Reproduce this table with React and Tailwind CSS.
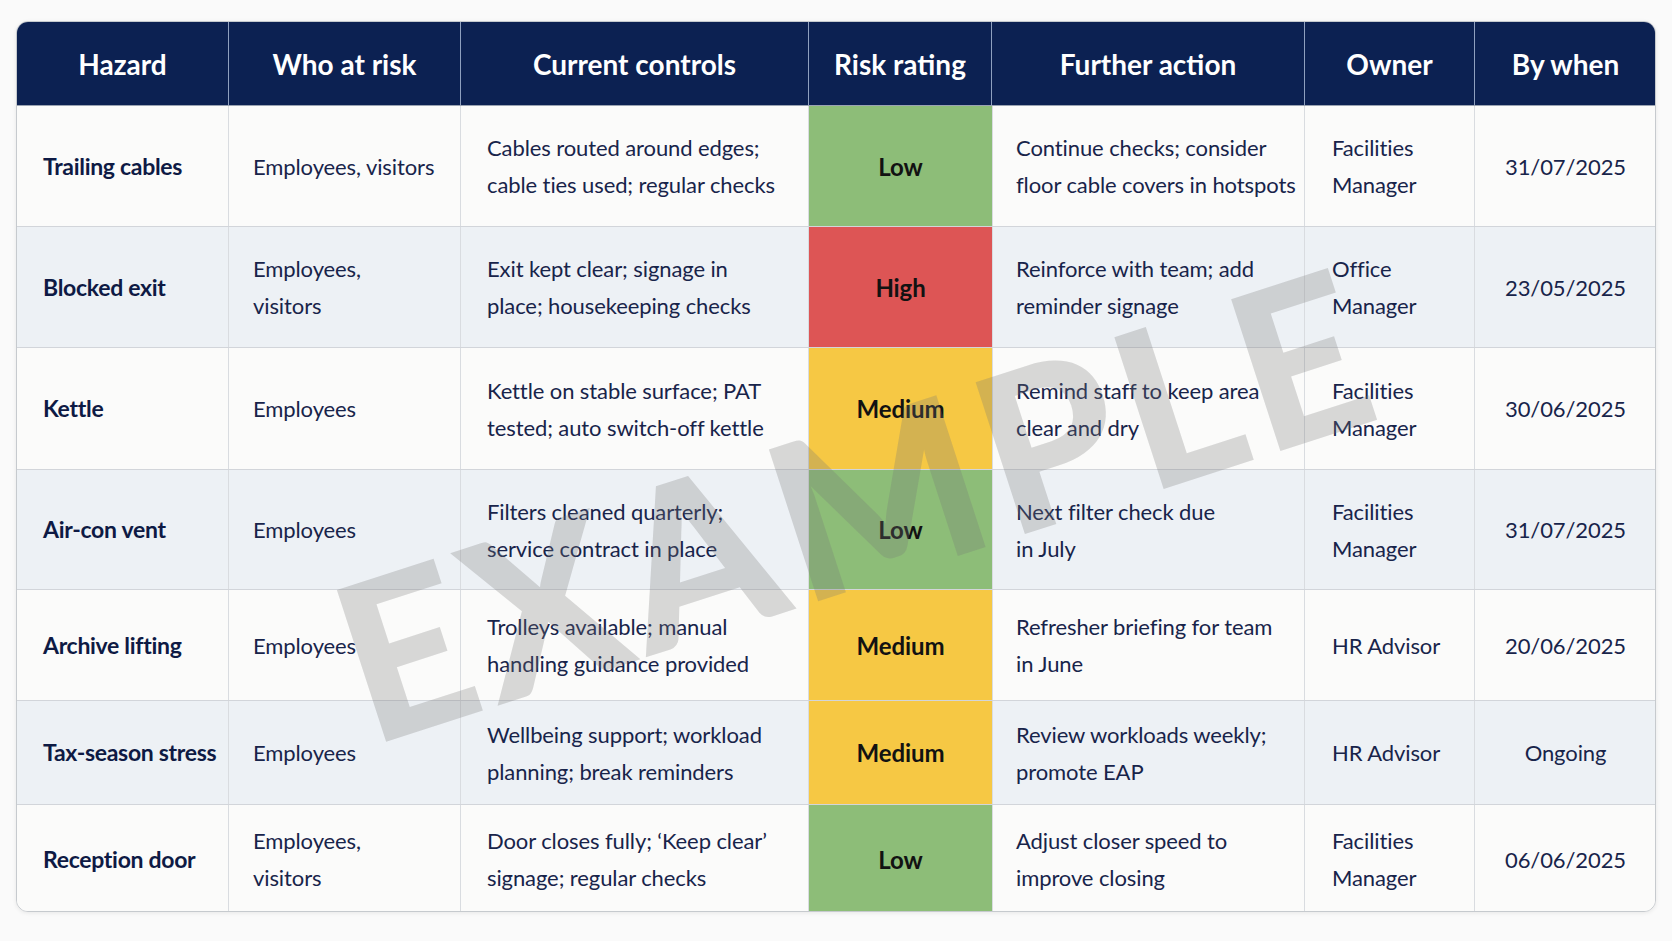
import React from "react";

const cols = [
  { title: "Hazard", cell: "pl-[26px] justify-start" },
  { title: "Who at risk", cell: "pl-[24px] justify-start" },
  { title: "Current controls", cell: "pl-[26px] justify-start" },
  { title: "Risk rating", cell: "justify-center" },
  { title: "Further action", cell: "pl-[23px] justify-start" },
  { title: "Owner", cell: "pl-[27px] justify-start" },
  { title: "By when", cell: "justify-center text-center" },
];

const riskStyles = {
  Low: "bg-[#8dbd78]",
  High: "bg-[#dd5555]",
  Medium: "bg-[#f6c844]",
};

const rows = [
  {
    h: "h-[121px]",
    bg: "bg-[#fbfbfa]",
    hazard: "Trailing cables",
    who: ["Employees, visitors"],
    controls: ["Cables routed around edges;", "cable ties used; regular checks"],
    risk: "Low",
    action: ["Continue checks; consider", "floor cable covers in hotspots"],
    owner: ["Facilities", "Manager"],
    when: "31/07/2025",
  },
  {
    h: "h-[121px]",
    bg: "bg-[#edf1f5]",
    hazard: "Blocked exit",
    who: ["Employees,", "visitors"],
    controls: ["Exit kept clear; signage in", "place; housekeeping checks"],
    risk: "High",
    action: ["Reinforce with team; add", "reminder signage"],
    owner: ["Office", "Manager"],
    when: "23/05/2025",
  },
  {
    h: "h-[122px]",
    bg: "bg-[#fbfbfa]",
    hazard: "Kettle",
    who: ["Employees"],
    controls: ["Kettle on stable surface; PAT", "tested; auto switch-off kettle"],
    risk: "Medium",
    action: ["Remind staff to keep area", "clear and dry"],
    owner: ["Facilities", "Manager"],
    when: "30/06/2025",
  },
  {
    h: "h-[120px]",
    bg: "bg-[#edf1f5]",
    hazard: "Air-con vent",
    who: ["Employees"],
    controls: ["Filters cleaned quarterly;", "service contract in place"],
    risk: "Low",
    action: ["Next filter check due", "in July"],
    owner: ["Facilities", "Manager"],
    when: "31/07/2025",
  },
  {
    h: "h-[111px]",
    bg: "bg-[#fbfbfa]",
    hazard: "Archive lifting",
    who: ["Employees"],
    controls: ["Trolleys available; manual", "handling guidance provided"],
    risk: "Medium",
    action: ["Refresher briefing for team", "in June"],
    owner: ["HR Advisor"],
    when: "20/06/2025",
  },
  {
    h: "h-[104px]",
    bg: "bg-[#edf1f5]",
    hazard: "Tax-season stress",
    who: ["Employees"],
    controls: ["Wellbeing support; workload", "planning; break reminders"],
    risk: "Medium",
    action: ["Review workloads weekly;", "promote EAP"],
    owner: ["HR Advisor"],
    when: "Ongoing",
  },
  {
    h: "h-[108px]",
    bg: "bg-[#fbfbfa]",
    hazard: "Reception door",
    who: ["Employees,", "visitors"],
    controls: ["Door closes fully; \u2018Keep clear\u2019", "signage; regular checks"],
    risk: "Low",
    action: ["Adjust closer speed to", "improve closing"],
    owner: ["Facilities", "Manager"],
    when: "06/06/2025",
  },
];

const Lines = ({ lines }) => (
  <div className="flex flex-col">
    {lines.map((l) => (
      <span key={l} className="whitespace-nowrap">
        {l}
      </span>
    ))}
  </div>
);

const App = () => {
  return (
    <div className="min-h-screen bg-[#fafafa] pt-[21px] pl-[16px] font-['Lato',sans-serif]">
      <div className="relative w-[1640px] h-[891px] rounded-[12px] border border-[#c6cace] overflow-hidden shadow-[0_1px_4px_rgba(0,0,0,0.08)] bg-[#fbfbfa]">
        {/* header */}
        <div className="grid grid-cols-[212px_232px_348px_183px_313px_170px_181px] h-[84px] bg-[#0c2152] border-b border-[#9aa3b2]">
          {cols.map((c, i) => (
            <div
              key={c.title}
              className={
                "flex items-center justify-center text-white font-bold text-[28px] " +
                (i < cols.length - 1 ? "border-r border-[#8fa0bf]" : "")
              }
            >
              {c.title}
            </div>
          ))}
        </div>

        {/* body */}
        {rows.map((r, ri) => (
          <div
            key={r.hazard}
            className={
              "grid grid-cols-[212px_232px_348px_183px_313px_170px_181px] text-[22px] leading-[37px] tracking-[-0.1px] text-[#18244a] " +
              r.h +
              " " +
              r.bg +
              " " +
              (ri < rows.length - 1 ? "border-b border-[#d2d5da]" : "")
            }
          >
            <div className="flex items-center pl-[26px] border-r border-[#d9dce0] font-bold text-[23px] tracking-[-0.3px] text-[#0e1a44] whitespace-nowrap">
              {r.hazard}
            </div>
            <div className="flex items-center pl-[24px] border-r border-[#d9dce0]">
              <Lines lines={r.who} />
            </div>
            <div className="flex items-center pl-[26px] border-r border-[#d9dce0]">
              <Lines lines={r.controls} />
            </div>
            <div
              className={
                "flex items-center justify-center font-bold text-[24px] text-[#121212] " +
                riskStyles[r.risk]
              }
            >
              {r.risk}
            </div>
            <div className="flex items-center pl-[23px] border-r border-l border-[#d9dce0]">
              <Lines lines={r.action} />
            </div>
            <div className="flex items-center pl-[27px] border-r border-[#d9dce0]">
              <Lines lines={r.owner} />
            </div>
            <div className="flex items-center justify-center">{r.when}</div>
          </div>
        ))}

        {/* watermark */}
        <div className="pointer-events-none absolute left-[838px] top-[478px] -translate-x-1/2 -translate-y-1/2 -rotate-[18deg] whitespace-nowrap font-black text-[220px] leading-none tracking-[8px] text-[rgba(120,120,120,0.27)]">
          EXAMPLE
        </div>
      </div>
    </div>
  );
};

export default App;
